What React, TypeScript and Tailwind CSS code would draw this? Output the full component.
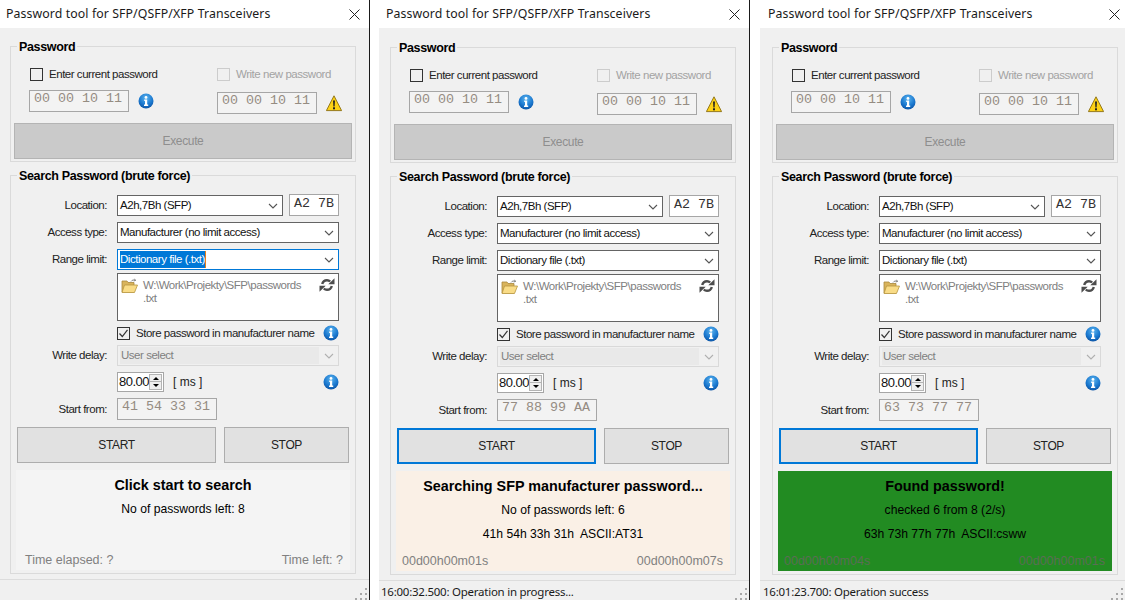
import type { ReactNode } from "react";

const ui = "font-['Liberation_Sans',sans-serif]";
const segoe = "font-['Noto_Sans',sans-serif]";
const mono = "font-['Liberation_Mono',monospace] text-[13.33px] leading-none";

function InfoIcon({ id }: { id: string }) {
  return (
    <svg viewBox="0 0 16 16" className="h-4 w-4 shrink-0">
      <defs>
        <radialGradient id={id} cx="50%" cy="30%" r="75%">
          <stop offset="0%" stopColor="#5cb4ee" />
          <stop offset="60%" stopColor="#1a78cf" />
          <stop offset="100%" stopColor="#0b4f9e" />
        </radialGradient>
      </defs>
      <circle cx="8" cy="8" r="7.5" fill={`url(#${id})`} />
      <circle cx="8" cy="4.4" r="1.4" fill="#fff" />
      <path d="M6.2 6.6h3v5h1v1.3H6v-1.3h1v-3.7h-.8z" fill="#fff" />
    </svg>
  );
}

function WarnIcon() {
  return (
    <svg viewBox="0 0 16 17" className="h-[17px] w-4 shrink-0">
      <path d="M8 .8 15.6 15.6H.4Z" fill="#fcd116" stroke="#8a6d10" strokeWidth="0.9" strokeLinejoin="round" />
      <path d="M7 5.5h2l-.4 6h-1.2z" fill="#222" />
      <rect x="7" y="12.3" width="2" height="2" fill="#222" />
    </svg>
  );
}

function FolderIcon() {
  return (
    <svg viewBox="0 0 17 16" className="h-4 w-[17px] shrink-0">
      <path d="M1 3h5l1 1.5h6V14H1z" fill="#d9b45c" stroke="#a9883c" strokeWidth="0.8" />
      <path d="M3.5 7H16.5L13.5 14.5H1z" fill="#f9dc87" stroke="#b8953f" strokeWidth="0.8" />
      <path d="M10 3.5c1-1.6 3-2 4.5-1M14.5 2.5 13.6.8M14.5 2.5l-1.8.4" fill="none" stroke="#7d7d7d" strokeWidth="0.9" />
    </svg>
  );
}

function RefreshIcon() {
  return (
    <svg viewBox="0 0 16 14" className="h-[14px] w-4 shrink-0">
      <path d="M3.2 6C3.800 3.600 5.700 2.200 8 2.200c1.300 0 2.300.4 3.200 1.300" fill="none" stroke="#4d4d4d" strokeWidth="2.400" />
      <path d="M9.300 6.200h6.200V.2z" fill="#4d4d4d" />
      <path d="M12.800 8c-.6 2.400-2.500 3.800-4.800 3.800-1.300 0-2.300-.4-3.200-1.300" fill="none" stroke="#4d4d4d" strokeWidth="2.400" />
      <path d="M6.700 7.800H.5v6z" fill="#4d4d4d" />
    </svg>
  );
}

function Chevron({ light }: { light?: boolean }) {
  return (
    <svg viewBox="0 0 10 6" className="h-[6px] w-[10px] shrink-0">
      <path d="M1 1 5 5 9 1" fill="none" stroke={light ? "#b0b0b0" : "#555"} strokeWidth="1.1" />
    </svg>
  );
}

function Grip() {
  const dots = [
    [10, 0],
    [5, 5],
    [10, 5],
    [0, 10],
    [5, 10],
    [10, 10],
  ];
  return (
    <svg viewBox="0 0 12 12" className="h-3 w-3 shrink-0">
      {dots.map(([x, y]) => (
        <rect key={`${x}-${y}`} x={x} y={y} width="2" height="2" fill="#a8a8a8" />
      ))}
    </svg>
  );
}

function Checkbox({ checked, disabled }: { checked?: boolean; disabled?: boolean }) {
  return (
    <span
      className={`flex h-[13px] w-[13px] shrink-0 items-center justify-center border ${
        disabled ? "border-[#cccccc] bg-[#f0f0f0]" : "border-[#333333] bg-[#f0f0f0]"
      }`}
    >
      {checked && (
        <svg viewBox="0 0 11 11" className="h-[11px] w-[11px]">
          <path d="M1.500 5.500 4.300 8.500 9.500 1.800" fill="none" stroke="#333" strokeWidth="1.200" />
        </svg>
      )}
    </span>
  );
}

function HexBox({ value, className = "" }: { value: string; className?: string }) {
  return (
    <div className={`h-[22px] w-[100px] border border-[#a6a6a6] bg-[#f3f3f3] pl-[4px] pt-[1px] tracking-normal text-[#958c82] whitespace-pre ${mono} ${className}`}>
      {value}
    </div>
  );
}

function Combo({ text, focus, selected }: { text: string; focus?: boolean; selected?: boolean }) {
  return (
    <div className={`flex h-[21px] w-[222px] items-center justify-between bg-white pl-[2px] pr-[4px] border ${focus ? "border-[#0078d7]" : "border-[#646464]"}`}>
      <span className={selected ? "bg-[#0078d7] text-white border-r border-[#e8801a]" : "text-[#111]"}>{text}</span>
      <Chevron />
    </div>
  );
}

function Row({ label, children, className = "" }: { label: string; children: ReactNode; className?: string }) {
  return (
    <div className={`flex items-center ${className}`}>
      <span className="w-[96px] pt-[1px] text-right text-[#222]">{label}</span>
      <div className="ml-[10px] flex items-center">{children}</div>
    </div>
  );
}

function Group({ title, children, className = "" }: { title: string; children: ReactNode; className?: string }) {
  return (
    <div className={`w-[346px] border border-[#dadada] ${className}`}>
      <div className="-mt-[8px] ml-[6px] h-[16px] w-fit bg-[#f0f0f0] px-[2px] text-[12.5px] leading-[16px] tracking-[-0.35px] font-bold text-black">{title}</div>
      {children}
    </div>
  );
}

type PanelProps = {
  width: string;
  inset: string;
  titleInset: string;
  topGap: string;
  closePad: string;
  range: { focus?: boolean };
  start: string;
  startFocus?: boolean;
  statusBg: string;
  statusTitle: string;
  statusText: string;
  statusLine?: string;
  timeColor: string;
  timePad: string;
  timeLeft: string;
  timeRight: string;
  barText?: string;
  infoId: string;
  barInset: string;
};

function Panel(p: PanelProps) {
  return (
    <div className={`flex h-[600px] shrink-0 flex-col overflow-hidden bg-[#f0f0f0] text-[11.5px] tracking-[-0.47px] ${ui} ${p.width}`}>
      <div className={`flex h-[28px] shrink-0 items-center justify-between bg-white pt-[1px] text-[12.3px] tracking-[0.1px] text-[#1a1a1a] ${segoe} ${p.titleInset} ${p.closePad}`}>
        <span>Password tool for SFP/QSFP/XFP Transceivers</span>
        <svg viewBox="0 0 11 11" className="-mt-[1px] h-[11px] w-[11px]">
          <path d="M.5.5l10 10M10.500.5l-10 10" stroke="#222" strokeWidth="1" fill="none" />
        </svg>
      </div>

      <div className={`flex flex-col ${p.inset} ${p.topGap}`}>
        <Group title="Password">
          <div className="mt-[13px] flex">
            <div className="ml-[18px] w-[188px]">
              <label className="ml-[1px] flex h-[13px] items-center gap-[6px] text-[#222]">
                <Checkbox />
                <span className="pt-[1px]">Enter current password</span>
              </label>
              <div className="mt-[9px] flex items-center gap-[9px]">
                <HexBox value="00 00 10 11" />
                <InfoIcon id={`${p.infoId}-a`} />
              </div>
            </div>
            <div>
              <label className="flex h-[13px] items-center gap-[6px] text-[#a3a3a3]">
                <Checkbox disabled />
                <span className="pt-[1px]">Write new password</span>
              </label>
              <div className="mt-[11px] flex items-center gap-[9px]">
                <HexBox value="00 00 10 11" />
                <WarnIcon />
              </div>
            </div>
          </div>
          <button type="button" className="mt-[9px] ml-[3px] mb-[2px] flex h-[36px] w-[338px] items-center justify-center border border-[#b4b4b4] bg-[#cacaca] text-[12px] tracking-[-0.35px] text-[#8e8e8e]">
            Execute
          </button>
        </Group>

        <Group title="Search Password (brute force)" className="mt-[13px]">
          <Row label="Location:" className="mt-[10px] h-[22px]">
            <div className="flex h-[21px] w-[166px] items-center justify-between border border-[#646464] bg-white pl-[2px] pr-[4px] pt-[1px] text-[#111]">
              <span>A2h,7Bh (SFP)</span>
              <Chevron />
            </div>
            <div className={`ml-[6px] h-[22px] w-[50px] border border-[#a6a6a6] bg-white pl-[4px] pt-[2px] tracking-normal text-[#333] whitespace-pre ${mono}`}>A2 7B</div>
          </Row>
          <Row label="Access type:" className="mt-[6px] h-[21px]">
            <Combo text="Manufacturer (no limit access)" />
          </Row>
          <Row label="Range limit:" className="mt-[6px] h-[21px]">
            <Combo text="Dictionary file (.txt)" focus={p.range.focus} selected={p.range.focus} />
          </Row>
          <div className="mt-[3px] ml-[106px] flex h-[48px] w-[222px] items-start border border-[#646464] bg-white pl-[3px] pt-[4px] pr-[3px]">
            <FolderIcon />
            <span className="ml-[5px] w-[170px] pt-[1px] leading-[13px] text-[#808080]">
              W:\Work\Projekty\SFP\passwords .txt
            </span>
            <span className="ml-auto"><RefreshIcon /></span>
          </div>
          <div className="mt-[5px] ml-[106px] flex h-[14px] w-[222px] items-center justify-between text-[#222]">
            <label className="flex items-center gap-[6px] whitespace-nowrap">
              <Checkbox checked />
              <span className="pt-[1px]">Store password in manufacturer name</span>
            </label>
            <InfoIcon id={`${p.infoId}-b`} />
          </div>
          <Row label="Write delay:" className="mt-[5px] h-[21px]">
            <div className="flex h-[21px] w-[222px] items-center justify-between border border-[#d9d9d9] pr-[4px]">
              <span className="ml-[2px] flex h-[17px] w-[199px] items-center bg-[#e9e9e9] pl-[1px] text-[#808080]">User select</span>
              <Chevron light />
            </div>
          </Row>
          <div className="mt-[6px] ml-[106px] flex h-[20px] w-[222px] items-center">
            <div className="flex h-[20px] w-[47px] items-center justify-between border border-[#a6a6a6] bg-white pl-[1px] pr-[1px] text-[13px] tracking-[-0.5px] text-[#111]">
              80.00
              <div className="flex h-[16px] w-[13px] flex-col border border-[#b4b4b4] bg-[#efefef]">
                <span className="flex h-[7px] items-center justify-center border-b border-[#b4b4b4]">
                  <span className="h-0 w-0 border-x-[3px] border-b-[3px] border-x-transparent border-b-black" />
                </span>
                <span className="flex flex-1 items-center justify-center">
                  <span className="h-0 w-0 border-x-[3px] border-t-[3px] border-x-transparent border-t-black" />
                </span>
              </div>
            </div>
            <span className="ml-[9px] text-[12px] tracking-normal text-[#222]">[ ms ]</span>
            <span className="ml-auto"><InfoIcon id={`${p.infoId}-c`} /></span>
          </div>
          <Row label="Start from:" className="mt-[6px] h-[22px]">
            <HexBox value={p.start} />
          </Row>
          <div className="mt-[7px] ml-[6px] flex gap-[8px] text-[12px] tracking-[-0.35px]">
            <button type="button" className={`flex h-[36px] w-[199px] items-center justify-center bg-[#e1e1e1] text-[#222] ${p.startFocus ? "border-2 border-[#0078d7]" : "border border-[#adadad]"}`}>
              START
            </button>
            <button type="button" className="flex h-[36px] w-[125px] items-center justify-center border border-[#adadad] bg-[#e1e1e1] text-[#222]">
              STOP
            </button>
          </div>
          <div className={`mt-[7px] mb-[3px] ml-[5px] flex h-[100px] w-[334px] flex-col items-center tracking-normal ${p.statusBg}`}>
            <div className="mt-[6px] text-[14.35px] leading-[18px] font-bold text-black">{p.statusTitle}</div>
            <div className="mt-[7px] text-[12.15px] leading-[16px] text-black">{p.statusText}</div>
            {p.statusLine && <div className="mt-[8px] text-[12.15px] leading-[16px] text-black whitespace-pre">{p.statusLine}</div>}
            <div className={`mt-auto mb-[2px] flex w-full justify-between text-[12.5px] leading-[16px] ${p.timePad} ${p.timeColor}`}>
              <span>{p.timeLeft}</span>
              <span>{p.timeRight}</span>
            </div>
          </div>
        </Group>
      </div>

      <div className={`mt-[5px] flex flex-1 items-end justify-between border-t border-[#dcdcdc] pr-[2px] ${p.barInset}`}>
        <span className={`text-[11.5px] leading-[16px] tracking-[-0.25px] text-[#1a1a1a] ${segoe}`}>{p.barText}</span>
        <Grip />
      </div>
    </div>
  );
}

export default function App() {
  return (
    <div className="flex h-[600px] w-[1125px] overflow-hidden bg-white">
      <Panel
        infoId="p1"
        width="w-[369px]"
        inset="pl-[10px]"
        titleInset="pl-[6px]"
        closePad="pr-[9px]"
        topGap="mt-[18px]"
        barInset="pl-[1px]"
        range={{ focus: true }}
        start="41 54 33 31"
        statusBg="bg-[#f4f4f4]"
        statusTitle="Click start to search"
        statusText="No of passwords left: 8"
        timeColor="text-[#808080]"
        timePad="pl-[9px] pr-[7px]"
        timeLeft="Time elapsed: ?"
        timeRight="Time left: ?"
      />
      <div className="ml-0 mr-[9px] w-px shrink-0 bg-[#1a1a1a]" />
      <Panel
        infoId="p2"
        width="w-[370px]"
        inset="pl-[11px]"
        titleInset="pl-[7px]"
        closePad="pr-[9px]"
        topGap="mt-[19px]"
        barInset="pl-[2px]"
        range={{}}
        start="77 88 99 AA"
        startFocus
        statusBg="bg-[#faf0e6]"
        statusTitle="Searching SFP manufacturer password..."
        statusText="No of passwords left: 6"
        statusLine="41h 54h 33h 31h  ASCII:AT31"
        timeColor="text-[#808080]"
        timePad="pl-[6px] pr-[7px]"
        timeLeft="00d00h00m01s"
        timeRight="00d00h00m07s"
        barText="16:00:32.500: Operation in progress..."
      />
      <div className="mr-[10px] w-px shrink-0 bg-[#1a1a1a]" />
      <Panel
        infoId="p3"
        width="w-[365px]"
        inset="pl-[12px]"
        titleInset="pl-[8px]"
        closePad="pr-[5px]"
        topGap="mt-[19px]"
        barInset="pl-[3px]"
        range={{}}
        start="63 73 77 77"
        startFocus
        statusBg="bg-[#228b22]"
        statusTitle="Found password!"
        statusText="checked 6 from 8 (2/s)"
        statusLine="63h 73h 77h 77h  ASCII:csww"
        timeColor="text-[#5a6e55]"
        timePad="pl-[6px] pr-[7px]"
        timeLeft="00d00h00m04s"
        timeRight="00d00h00m01s"
        barText="16:01:23.700: Operation success"
      />
    </div>
  );
}
